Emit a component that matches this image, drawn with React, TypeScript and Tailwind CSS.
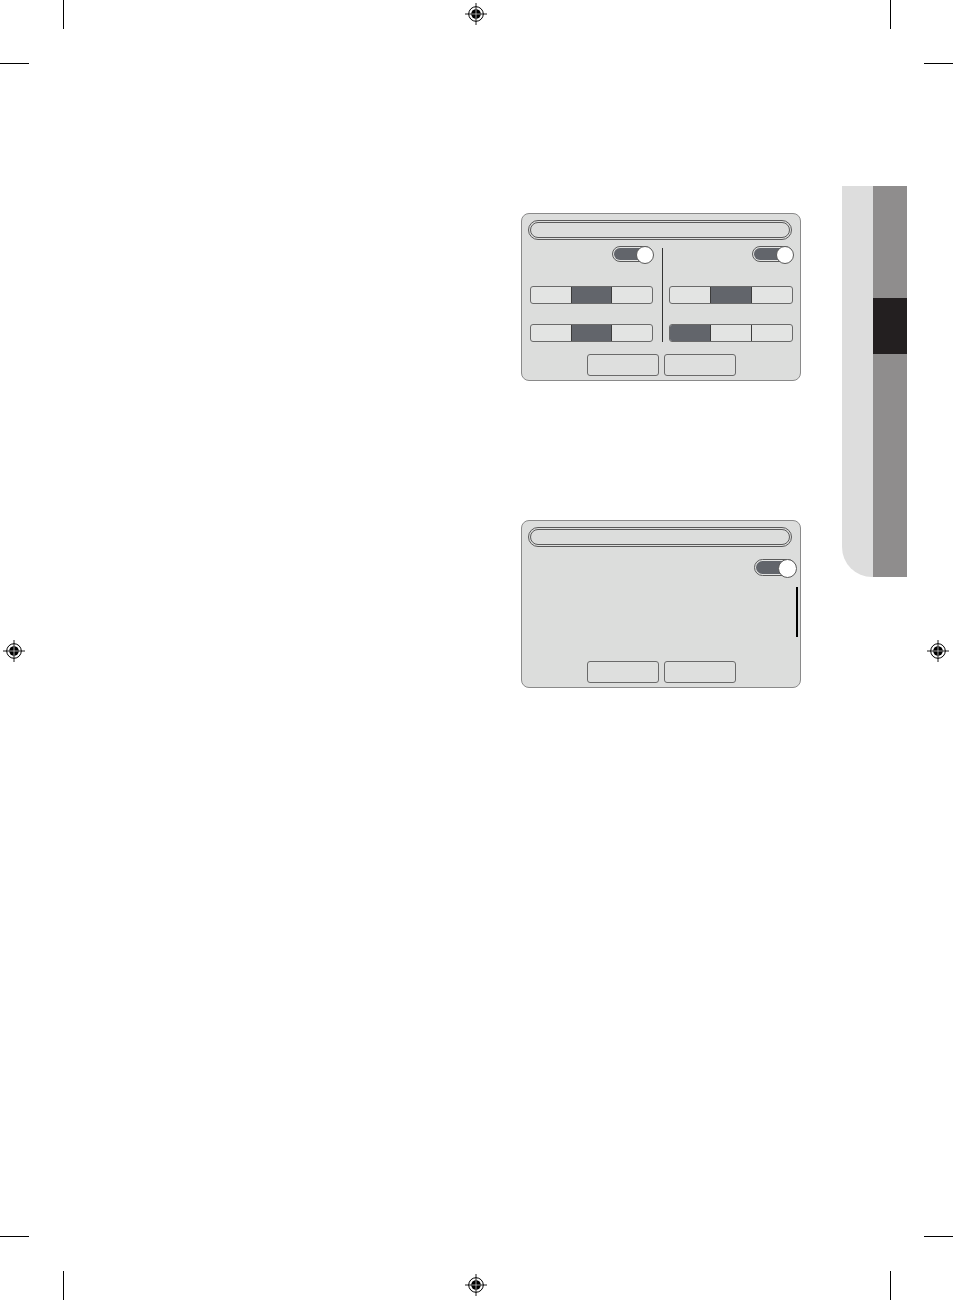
import React from "react";

function RegMark({ className }: { className: string }) {
  return (
    <svg className={`absolute ${className}`} width="24" height="24" viewBox="0 0 24 24">
      <circle cx="12" cy="12" r="7.3" fill="none" stroke="#000" strokeWidth="1" />
      <circle cx="12" cy="12" r="4.8" fill="#000" />
      <line x1="1" y1="12" x2="23" y2="12" stroke="#000" strokeWidth="0.9" />
      <line x1="12" y1="1" x2="12" y2="23" stroke="#000" strokeWidth="0.9" />
      <line x1="7.4" y1="12" x2="16.6" y2="12" stroke="#fff" strokeWidth="0.6" />
      <line x1="12" y1="7.4" x2="12" y2="16.6" stroke="#fff" strokeWidth="0.6" />
    </svg>
  );
}

function TitleBar() {
  return (
    <div className="h-[20px] w-[264px] rounded-full border border-[#5a5a5a] p-[1px]">
      <div className="h-full w-full rounded-full border border-[#5a5a5a]" />
    </div>
  );
}

function Toggle({ wide }: { wide?: boolean }) {
  return (
    <div
      className={`relative ${wide ? "h-[17px] w-[42px]" : "h-[16px] w-[41px]"} rounded-full border border-[#5a5a5a] bg-[#e2e3e2] p-[1px]`}
    >
      <div className="h-full w-full rounded-full bg-[#62656b]" />
      <div
        className={`absolute right-[-2px] top-[-1px] ${wide ? "h-[19px] w-[19px]" : "h-[18px] w-[18px]"} rounded-full border border-[#5a5a5a] bg-white`}
      />
    </div>
  );
}

function Segments({ active, w }: { active: number; w: string }) {
  return (
    <div className={`flex h-[18px] ${w} overflow-hidden rounded-[3px] border border-[#6a6a6a] bg-[#e3e4e3]`}>
      {[0, 1, 2].map((i) => (
        <div
          key={i}
          className={`flex-1 ${i > 0 ? "border-l border-[#3c3c3c]" : ""} ${i === active ? "bg-[#62656b]" : ""}`}
        />
      ))}
    </div>
  );
}

function Buttons() {
  return (
    <div className="mt-auto flex justify-center gap-[5px]">
      <div className="h-[22px] w-[72px] rounded-[3px] border border-[#6a6a6a] bg-[#dedfde]" />
      <div className="h-[22px] w-[72px] rounded-[3px] border border-[#6a6a6a] bg-[#dedfde]" />
    </div>
  );
}

function SettingsPanel() {
  return (
    <div className="flex h-[168px] w-[280px] flex-col rounded-[8px] border border-[#8a8a8a] bg-[#dcdddc] px-[6px] pt-[6px] pb-[4px]">
      <TitleBar />
      <div className="mt-[6px] flex">
        <div className="ml-[2px] flex w-[123px] flex-col">
          <div className="flex justify-end">
            <Toggle />
          </div>
          <div className="mt-[24px]">
            <Segments active={1} w="w-[123px]" />
          </div>
          <div className="mt-[20px]">
            <Segments active={1} w="w-[123px]" />
          </div>
        </div>
        <div className="ml-[9px] mt-[2px] w-px bg-[#333]" />
        <div className="ml-[6px] flex w-[124px] flex-col">
          <div className="flex justify-end">
            <Toggle />
          </div>
          <div className="mt-[24px]">
            <Segments active={1} w="w-[124px]" />
          </div>
          <div className="mt-[20px]">
            <Segments active={0} w="w-[124px]" />
          </div>
        </div>
      </div>
      <Buttons />
    </div>
  );
}

function OptionPanel() {
  return (
    <div className="relative flex h-[168px] w-[280px] flex-col rounded-[8px] border border-[#8a8a8a] bg-[#dcdddc] px-[6px] pt-[6px] pb-[4px]">
      <TitleBar />
      <div className="mt-[12px] mr-[-2px] flex justify-end">
        <Toggle wide />
      </div>
      <div className="absolute right-[2px] top-[66px] h-[50px] w-[2px] bg-black" />
      <Buttons />
    </div>
  );
}

export default function App() {
  return (
    <div className="relative h-[1300px] w-[953px] overflow-hidden bg-white">
      {/* crop marks */}
      <div className="absolute left-[63px] top-0 h-[29px] w-px bg-black" />
      <div className="absolute left-0 top-[63px] h-px w-[29px] bg-black" />
      <div className="absolute left-[890px] top-0 h-[29px] w-px bg-black" />
      <div className="absolute left-[924px] top-[63px] h-px w-[29px] bg-black" />
      <div className="absolute left-[63px] top-[1271px] h-[29px] w-px bg-black" />
      <div className="absolute left-0 top-[1236px] h-px w-[29px] bg-black" />
      <div className="absolute left-[890px] top-[1271px] h-[29px] w-px bg-black" />
      <div className="absolute left-[924px] top-[1236px] h-px w-[29px] bg-black" />

      <RegMark className="left-[464px] top-[2px]" />
      <RegMark className="left-[464px] top-[1273px]" />
      <RegMark className="left-[2px] top-[639px]" />
      <RegMark className="left-[926px] top-[639px]" />

      <div className="flex pl-[521px] pt-[186px]">
        <div className="mt-[27px] flex w-[280px] flex-col">
          <SettingsPanel />
          <div className="mt-[139px]">
            <OptionPanel />
          </div>
        </div>

        {/* chapter tab */}
        <div className="ml-[41px] flex h-[391px]">
          <div className="w-[31px] rounded-bl-[30px] bg-[#dddddd]" />
          <div className="flex w-[34px] flex-col bg-[#8f8d8d]">
            <div className="mt-[112px] h-[56px] bg-[#231f20]" />
          </div>
        </div>
      </div>
    </div>
  );
}
